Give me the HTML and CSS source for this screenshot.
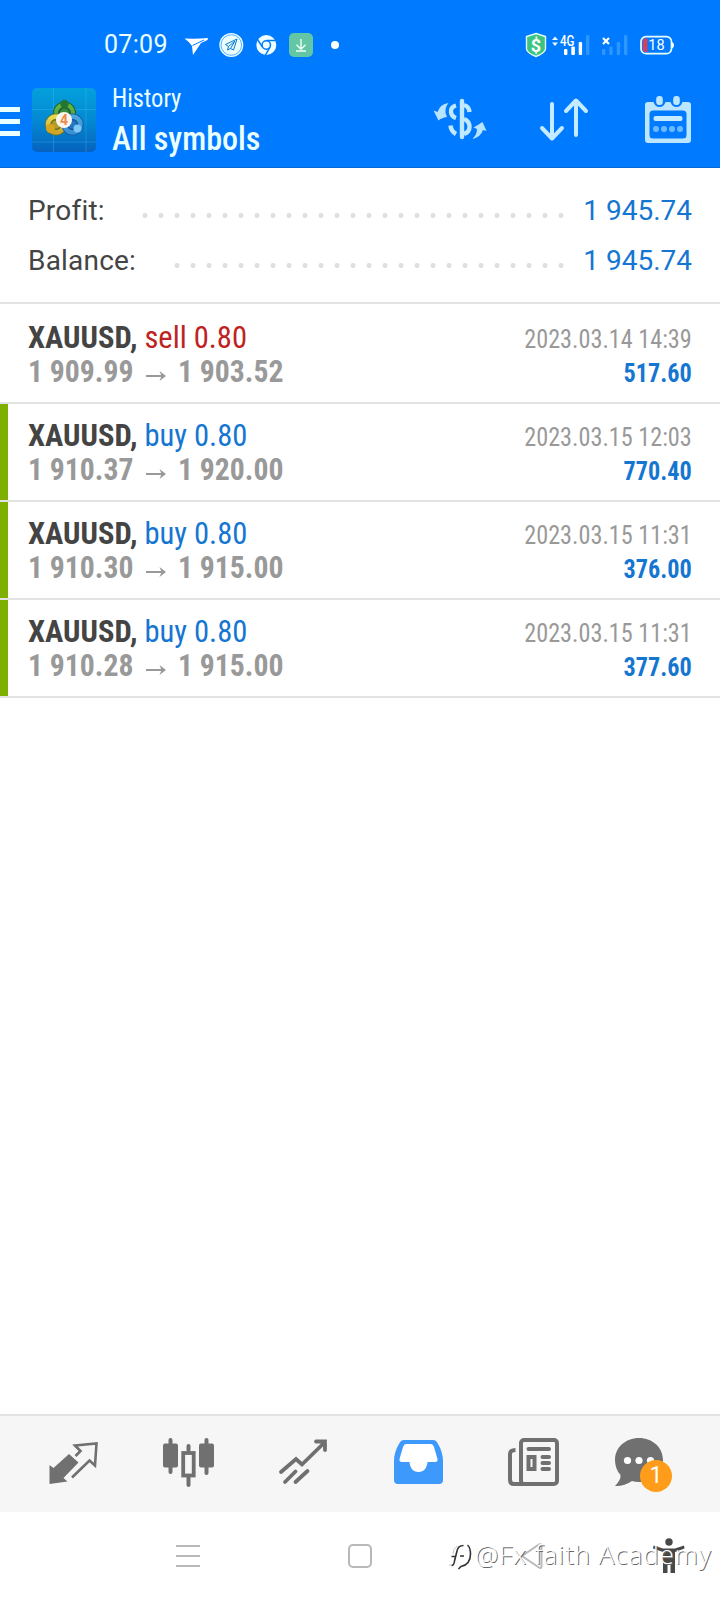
FILE: index.html
```html
<!DOCTYPE html>
<html lang="en">
<head>
<meta charset="utf-8">
<title>History</title>
<link rel="stylesheet" href="styles.css">
</head>
<body>
<div class="screen">
  <header class="top">
    <div class="status">
      <span class="clock">07:09</span>
      <svg class="status-left" width="160" height="30" viewBox="180 30 160 30">
        <path d="M184.500 38.500Q197 39 208 38L207.500 40L201 43L193 55L192 46Q189 41.500 184.500 38.500Z" fill="#fff"/><path d="M192.500 45.500L204 40" stroke="#007aff" stroke-width="1"/>
        <circle cx="231.300" cy="45" r="12" fill="#e9ffff"/><circle cx="231.300" cy="45" r="10.300" fill="none" stroke="#007aff" stroke-width=".6"/>
        <path d="M237 39L225.500 44.500L228.500 46.500L227.500 50L230.500 48.500L233.500 50ZM228.500 46.500L235 41L230.500 48.500" fill="none" stroke="#0878ce" stroke-width="1" stroke-linejoin="round"/>
        <circle cx="266.300" cy="45" r="10" fill="#effeff"/><circle cx="266.300" cy="45" r="4.200" fill="none" stroke="#007aff" stroke-width="1.500"/>
        <path d="M266.300 40.500H275.500M262.500 47.200L257.500 39.500M270 47.200L265.500 55" stroke="#007aff" stroke-width="1.500"/>
        <rect x="289" y="33" width="24" height="24" rx="5" fill="#63c6a5"/>
        <path d="M301 39V49M296.500 44.800L301 49.200L305.500 44.800M296 51H306" fill="none" stroke="#effff8" stroke-width="1.400"/>
        <circle cx="335" cy="45" r="4" fill="#fff"/>
      </svg>
      <svg class="status-right" width="160" height="30" viewBox="520 30 160 30">
        <path d="M536 33.500L545.500 36.500V49Q545 53 536 56.500Q527 53 526.500 49V36.500Z" fill="#3dc481" stroke="#e4fff5" stroke-width="1.400"/>
        <text x="536" y="51.500" class="dollar">$</text>
        <path d="M552 40L555 36.500L558 40ZM552 42.500L555 46L558 42.500Z" fill="#e9ffff"/>
        <text x="560" y="46" class="net" textLength="14.500" lengthAdjust="spacingAndGlyphs">4G</text>
        <g fill="#fff"><rect x="564" y="49" width="3.400" height="6" rx="1"/><rect x="571.300" y="46.500" width="3.600" height="8.500" rx="1"/><rect x="578.700" y="42" width="3.400" height="13" rx="1"/></g>
        <g fill="#2d96ff"><rect x="586" y="35" width="3.400" height="20" rx="1"/><rect x="602" y="49" width="3.400" height="6" rx="1"/><rect x="609.300" y="46.500" width="3.400" height="8.500" rx="1"/><rect x="616.700" y="42" width="3.400" height="13" rx="1"/><rect x="624" y="35" width="3.400" height="20" rx="1"/></g>
        <path d="M603 38L609 44M609 38L603 44" stroke="#fff" stroke-width="2.200"/>
        <rect x="641" y="36.700" width="30.500" height="17" rx="5" fill="none" stroke="#e9ffff" stroke-width="1.700"/>
        <path d="M647.500 38.500V52H645.500Q642.800 52 642.800 49V41.500Q642.800 38.500 645.500 38.500Z" fill="#d33f5c"/>
        <path d="M672 42Q674 43 674 45.200T672 48.500Z" fill="#fff"/>
        <text x="656.500" y="50" class="level">18</text>
      </svg>
    </div>
    <div class="appbar">
      <div class="menu"><i></i><i></i><i></i></div>
      <svg class="logo" width="64" height="64" viewBox="0 0 64 64">
        <defs>
          <linearGradient id="tile" x2="0" y2="1"><stop stop-color="#04a0dd"/><stop offset=".5" stop-color="#0389d2"/><stop offset="1" stop-color="#0562be"/></linearGradient>
          <linearGradient id="green" x2="0" y2="1"><stop stop-color="#65b83b"/><stop offset="1" stop-color="#4f9a4a"/></linearGradient>
          <linearGradient id="gold" x2="0" y2="1"><stop stop-color="#e6dc4e"/><stop offset="1" stop-color="#cfa52a"/></linearGradient>
          <linearGradient id="sky" x2="0" y2="1"><stop stop-color="#4ca6e0"/><stop offset="1" stop-color="#3a8fd6"/></linearGradient>
        </defs>
        <rect width="64" height="64" rx="5" fill="url(#tile)"/>
        <path d="M21.500 0V64M54 0V64M0 21.500H64M0 54H64" stroke="#4dc8ed" stroke-opacity=".3"/>
        <circle cx="32.500" cy="25" r="8" fill="#3c8a3c" stroke="#1c6537" stroke-width="7"/><circle cx="32.500" cy="25" r="8.500" fill="none" stroke="url(#green)" stroke-width="4"/>
        <circle cx="24" cy="36.500" r="7.500" fill="#b59a2a" stroke="#6f7423" stroke-width="7"/><circle cx="24" cy="36.500" r="8" fill="none" stroke="url(#gold)" stroke-width="4.500"/>
        <circle cx="40.500" cy="36.500" r="7.500" fill="#2377c0" stroke="#165a9c" stroke-width="7"/><circle cx="40.500" cy="36.500" r="8" fill="none" stroke="url(#sky)" stroke-width="4.500"/>
        <circle cx="32.500" cy="16" r="4.200" fill="#247532"/><circle cx="18.500" cy="40.500" r="4.500" fill="#d5a51f"/><circle cx="45.500" cy="40.500" r="4" fill="#7cc6f3"/>
        <circle cx="32" cy="32" r="8" fill="#fbf7ef"/>
        <text x="32" y="37" class="four">4</text>
      </svg>
      <div class="titles">
        <div class="title-small"><span class="fit">History</span></div>
        <div class="title-big"><span class="fit">All symbols</span></div>
      </div>
      <svg class="actions" width="270" height="60" viewBox="425 90 270 60">
        <g fill="none" stroke="#c0e9ff" stroke-width="4.400">
          <path d="M462 101V137" stroke-linecap="round"/>
          <path d="M456 105.500Q450.500 107 451 112Q451.500 116.500 456 118M464 105Q469 106.500 469.500 112M464 119Q469.500 121 469.500 127Q469.500 132 464 134M450.500 125.500Q451 131 456 134"/>
        </g>
        <g fill="#b7e5ff"><path d="M448.500 103Q445 107 445.500 113L447 117Q441 118 438.500 120.500L433.500 110.500L437.500 112Q440 104 448.500 103Z"/><path d="M472 139Q477 135 477 129L473.500 127.500Q478 125 482.500 122L486.500 131L483 130Q481 137 472 139Z"/></g>
        <path d="M552 104V138M542 128L552 138.500L562 128M576 135V101M566 111L576 100.500L586 111" fill="none" stroke="#c4ebff" stroke-width="4" stroke-linecap="round" stroke-linejoin="round"/>
        <path fill-rule="evenodd" fill="#bce6ff" d="M648 102H653.500Q655 107 659.500 107Q664 107 665.500 102H670.500Q672 107 676.500 107Q681 107 682.500 102H688Q691 102 691 105V140Q691 143 688 143H648Q645 143 645 140V105Q645 102 648 102ZM653 110.500Q649.500 110.500 649.500 114V135Q649.500 138.500 653 138.500H683Q686.500 138.500 686.500 135V114Q686.500 110.500 683 110.500Z"/>
        <rect x="656.200" y="96" width="6.600" height="9" rx="3" fill="#bce6ff"/><rect x="673.200" y="96" width="6.600" height="9" rx="3" fill="#bce6ff"/>
        <rect x="653.500" y="116" width="29" height="5" rx="2" fill="#c4ebff"/>
        <g fill="#6bb9ff"><circle cx="656" cy="129" r="3"/><circle cx="664" cy="129" r="3"/><circle cx="672" cy="129" r="3"/><circle cx="680" cy="129" r="3"/></g>
      </svg>
    </div>
  </header>

  <section class="summary">
    <div class="sum-row"><span class="label">Profit:</span><span class="dots dots-long"></span><span class="amount">1 945.74</span></div>
    <div class="sum-row"><span class="label">Balance:</span><span class="dots dots-short"></span><span class="amount">1 945.74</span></div>
  </section>

  <main class="deals">
    <article class="deal first">
      <div class="left"><div class="head"><b>XAUUSD,</b> <span class="sell">sell 0.80</span></div><div class="prices"><span class="p">1 909.99</span><svg class="arrow" width="20" height="12"><path d="M0 6H17"/><path class="tip" d="M13.500 1L20 6L13.500 11L15.500 6Z"/></svg><span class="p">1 903.52</span></div></div>
      <div class="right"><div class="date">2023.03.14 14:39</div><div class="value">517.60</div></div>
    </article>
    <article class="deal win">
      <div class="left"><div class="head"><b>XAUUSD,</b> <span class="buy">buy 0.80</span></div><div class="prices"><span class="p">1 910.37</span><svg class="arrow" width="20" height="12"><path d="M0 6H17"/><path class="tip" d="M13.500 1L20 6L13.500 11L15.500 6Z"/></svg><span class="p">1 920.00</span></div></div>
      <div class="right"><div class="date">2023.03.15 12:03</div><div class="value">770.40</div></div>
    </article>
    <article class="deal win">
      <div class="left"><div class="head"><b>XAUUSD,</b> <span class="buy">buy 0.80</span></div><div class="prices"><span class="p">1 910.30</span><svg class="arrow" width="20" height="12"><path d="M0 6H17"/><path class="tip" d="M13.500 1L20 6L13.500 11L15.500 6Z"/></svg><span class="p">1 915.00</span></div></div>
      <div class="right"><div class="date">2023.03.15 11:31</div><div class="value">376.00</div></div>
    </article>
    <article class="deal win">
      <div class="left"><div class="head"><b>XAUUSD,</b> <span class="buy">buy 0.80</span></div><div class="prices"><span class="p">1 910.28</span><svg class="arrow" width="20" height="12"><path d="M0 6H17"/><path class="tip" d="M13.500 1L20 6L13.500 11L15.500 6Z"/></svg><span class="p">1 915.00</span></div></div>
      <div class="right"><div class="date">2023.03.15 11:31</div><div class="value">377.60</div></div>
    </article>
  </main>

  <nav class="tabs">
    <svg width="52" height="52" viewBox="47 1436 52 52"><path d="M49.500 1465L53.500 1468L69 1454L78.500 1462.500L63.500 1478L67.500 1481.500L49.500 1484Z" fill="#707070"/><path d="M75.500 1456L80.500 1451L75 1445.500L96.500 1443.500L95 1465.500L89.500 1460.500L72 1477.500" fill="none" stroke="#707070" stroke-width="2.600"/></svg>
    <svg width="52" height="52" viewBox="162 1436 52 52"><g fill="#707070"><rect x="163" y="1443.500" width="15" height="24" rx="2"/><rect x="168.500" y="1438" width="4" height="36" rx="2"/><rect x="199" y="1443.500" width="15" height="24" rx="2"/><rect x="204.500" y="1438" width="4" height="37" rx="2"/><rect x="186.500" y="1444" width="4" height="8" rx="2"/><rect x="186.500" y="1474" width="4" height="13" rx="2"/></g><rect x="183.200" y="1453" width="10.500" height="22.500" fill="none" stroke="#707070" stroke-width="3.800"/></svg>
    <svg width="52" height="52" viewBox="277 1436 52 52"><path d="M281 1472L296 1459L302 1464.500L325 1442M316 1441.500H325V1450M285 1482L295.500 1471.500M295.500 1482L307.500 1471" fill="none" stroke="#707070" stroke-width="3.800" stroke-linecap="round"/></svg>
    <svg width="52" height="52" viewBox="392 1436 52 52"><path fill="#3d99fb" d="M404 1440H433Q436 1440 437.500 1443Q443 1452 443 1461V1480Q443 1484 439 1484H398Q394 1484 394 1480V1461Q394 1452 399.500 1443Q401 1440 404 1440Z"/><path fill="#fff" d="M406 1444Q404 1444 403 1447L399.500 1459Q399 1462 402 1462H409.500C410 1468 413 1472 418.500 1472S427 1468 427.500 1462H435Q438 1462 437.500 1459L434 1447Q433 1444 431 1444Z"/></svg>
    <svg width="52" height="52" viewBox="507 1436 52 52"><g fill="none" stroke="#707070" stroke-width="4"><rect x="521" y="1440" width="36" height="44" rx="3"/><path d="M515.500 1450Q510 1450 510 1454V1480Q510 1484 514 1484H524"/><rect x="528.500" y="1457" width="6" height="12"/><path stroke-linecap="round" d="M528.500 1449H549M542.500 1457H549M542.500 1463H549M542.500 1469H549"/></g></svg>
    <div class="chat"><svg width="52" height="52" viewBox="614 1436 52 52"><path fill="#707070" d="M639 1438C652.500 1438 663 1447.500 663 1460S652.500 1482 639 1482Q635 1482 632 1481Q624 1486.500 615 1486Q621 1480 620.500 1475Q615 1469 615 1460C615 1447.500 625.500 1438 639 1438Z"/><g fill="#fff"><circle cx="627.500" cy="1460.500" r="3.600"/><circle cx="639" cy="1460.500" r="3.600"/><circle cx="650.500" cy="1460.500" r="3.600"/></g></svg><span class="badge">1</span></div>
  </nav>

  <footer class="sysnav">
    <div class="recents"><i></i><i></i><i></i></div>
    <div class="home"></div>
    <svg class="back" width="24" height="30" viewBox="520 1541 24 30"><path d="M522 1556L539 1544.500Q541.500 1543.500 541.500 1546V1566Q541.500 1569 539 1567.500Z" fill="none" stroke="#b9b9b9" stroke-width="2"/></svg>
    <svg class="access" width="34" height="38" viewBox="652 1537 34 38"><g fill="#484848"><circle cx="669" cy="1542" r="3.700"/><path d="M653.500 1545.500L663 1548.500H675L684 1545.500L684.500 1548.500L675 1552V1573H670.500V1563H667.500V1573H663V1552L653 1548.500Z"/></g></svg>
    <div class="watermark"><svg width="24" height="28" viewBox="448 1546 24 28"><path class="mark-faint" d="M457 1548Q453 1551 453 1556M449 1567H451"/><path class="mark-shadow" d="M463.500 1547.500Q458 1547.500 457 1553L454.500 1563Q454 1567.500 451.500 1567.500M451.500 1558.500H455.500M460 1558H464"/><path class="mark-shadow" d="M467.500 1547Q470.500 1549.500 470.500 1556Q470.500 1566.500 461 1568.500L458.500 1571"/></svg><span>@Fx faith Academy</span></div>
  </footer>
</div>
</body>
</html>
```
FILE: styles.css
```css
* { box-sizing: border-box; }
body { margin: 0; background: #fff; }
.screen { width: 720px; height: 1600px; display: flex; flex-direction: column; overflow: hidden; font-family: Roboto, "Liberation Sans", sans-serif; }
svg { display: block; flex: none; }

.top { height: 168px; background: #007aff; border-bottom: 1px solid #086bd5; color: #eaffff; flex: none; }
.status { height: 84px; padding: 30px 40px 0 104px; display: flex; align-items: flex-start; }
.clock { width: 76px; font-size: 25px; line-height: 30px; font-weight: 380; letter-spacing: .3px; white-space: nowrap; }
.status-right { margin-left: auto; }
.dollar { font: 700 18px Roboto, sans-serif; fill: #fff; text-anchor: middle; }
.net { font: 500 14px Roboto, sans-serif; fill: #fff; }
.level { font: 400 14.5px Roboto, sans-serif; fill: #fff; text-anchor: middle; }
.four { font: 700 14px Roboto, sans-serif; fill: #f08a4b; text-anchor: middle; }

.appbar { display: flex; align-items: flex-start; padding-right: 25px; }
.menu { width: 20px; padding-top: 23px; display: flex; flex-direction: column; gap: 7px; }
.menu i { height: 5px; background: #eaffff; }
.logo { margin: 4px 0 0 12px; }
.titles { flex: 1; margin-left: 16px; margin-top: -1px; white-space: nowrap; }
.fit { display: inline-block; font-stretch: 75%; transform: scaleX(.944); transform-origin: 0 50%; }
.title-small { font-size: 26px; line-height: 30px; font-weight: 430; }
.title-big { font-size: 34px; line-height: 44px; padding-top: 3px; font-weight: 490; }
.actions { margin-top: 6px; }

.summary { height: 136px; padding: 18px 28px 0; border-bottom: 2px solid #e3e3e3; flex: none; }
.sum-row { height: 50px; display: flex; justify-content: space-between; font-size: 28px; line-height: 50px; color: #444; white-space: nowrap; }
.label { letter-spacing: .2px; font-weight: 380; }
.amount { color: #1576d2; width: 109px; text-align: right; font-weight: 380; }
.dots { height: 5px; margin: 27px 14px 0 auto; background: radial-gradient(circle, #dfdfdf 2.2px, transparent 2.8px) 0 0 / 16px 5px; }
.dots-long { width: 432px; }
.dots-short { width: 400px; }

.deal { height: 98px; padding: 14px 28px 0; border-bottom: 2px solid #e3e3e3; display: flex; justify-content: space-between; white-space: nowrap; font-stretch: 75%; }
.deal.first { height: 100px; padding-top: 16px; }
.win { background: linear-gradient(#7fb000, #7fb000) 0 0 / 8px 100% no-repeat padding-box; }
.left { font-size: 32px; line-height: 34px; color: #444; }
.head { transform: scaleX(.955); transform-origin: 0 50%; }
.sell { color: #c02222; font-weight: 430; }
.buy { color: #1576d2; font-weight: 430; }
.prices { display: flex; color: #999; font-weight: 700; }
.p { transform: scaleX(.928); transform-origin: 0 50%; margin-right: -8px; }
.arrow { margin: 16px 13px 0 20px; margin-right: 12px; fill: none; stroke: #999; stroke-width: 2; }
.prices .arrow { margin-left: 12px; }
.arrow .tip { fill: #999; stroke: none; }
.right { padding-top: 2px; font-size: 26px; line-height: 34px; text-align: right; transform: scaleX(.932); transform-origin: 100% 50%; }
.date { color: #999; }
.value { color: #1576d2; font-weight: 700; }

.tabs { height: 98px; margin-top: auto; padding: 20px 0 0 47px; background: #f6f6f6; border-top: 2px solid #e3e3e3; display: flex; gap: 63px; flex: none; }
.chat { position: relative; margin-left: -8px; }
.badge { position: absolute; left: 26px; top: 24px; width: 32px; height: 32px; border-radius: 50%; background: #ff9c1a; color: #fff; font-size: 23px; line-height: 32px; text-align: center; }

.sysnav { position: relative; height: 88px; padding: 32px 0 0 176px; display: flex; align-items: flex-start; flex: none; }
.recents { width: 24px; display: flex; flex-direction: column; gap: 8px; padding-top: 1px; }
.recents i { height: 2px; background: #b9b9b9; }
.home { width: 24px; height: 24px; margin-left: 148px; border: 2px solid #b9b9b9; border-radius: 5px; }
.back { margin: -3px 0 0 148px; }
.access { margin: -7px 0 0 108px; }
.watermark { position: absolute; left: 448px; top: 27px; display: flex; gap: 3px; color: #fff; font: 300 26px/30px "Open Sans", "Noto Sans", sans-serif; letter-spacing: .95px; text-shadow: 1px 1px 0 #666; white-space: nowrap; }
.watermark svg { margin-top: 5px; fill: none; }
.mark-faint { stroke: #c4c4c4; stroke-width: 1; }
.mark-shadow { stroke: #333; stroke-width: 1.6; }
```
